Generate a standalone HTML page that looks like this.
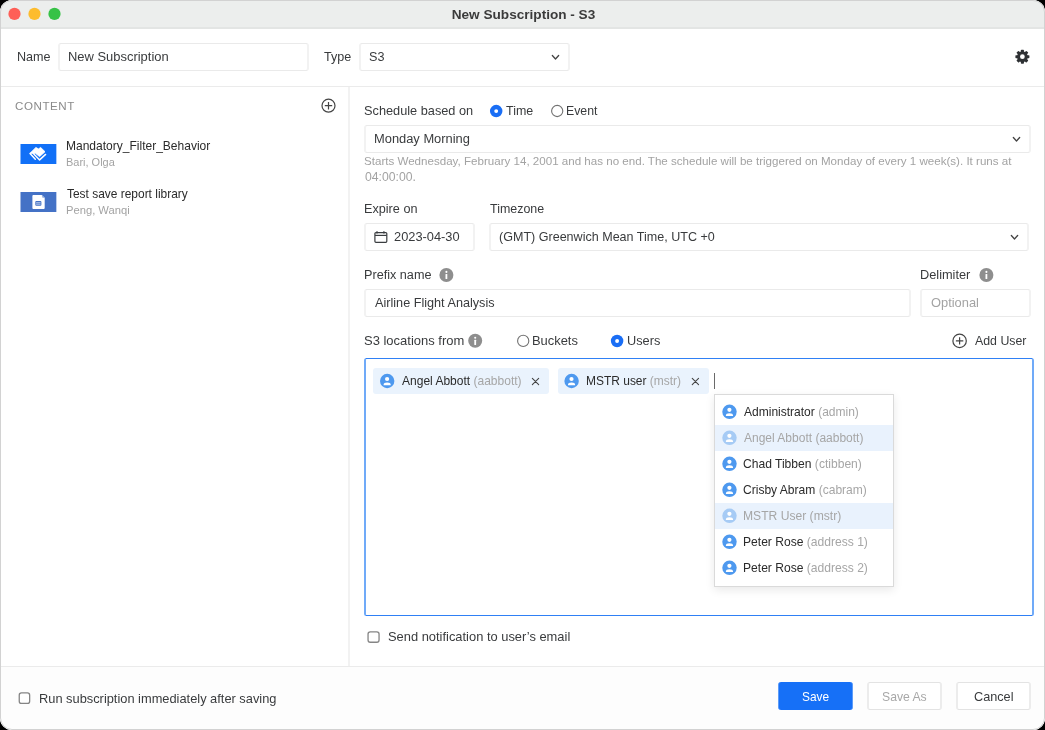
<!DOCTYPE html>
<html><head><meta charset="utf-8">
<style>
*{box-sizing:border-box;margin:0;padding:0}
html,body{width:1045px;height:730px;overflow:hidden;background:#000}
body{font-family:"Liberation Sans",sans-serif;color:#333;position:relative}
#win{position:absolute;left:0;top:0;width:1045px;height:730px;border-radius:12px;background:#fff;overflow:hidden}
#frame{position:absolute;left:0;top:0;width:1045px;height:730px;border-radius:12px;border:1px solid #d2d2d2;pointer-events:none}
.a{position:absolute}
.t{position:absolute;white-space:nowrap;line-height:1;will-change:transform}
.box{position:absolute;border-style:solid;border-color:#eaeaea #f2f2f2;border-width:1px 2px;border-radius:3px;background:#fff}
.radio{position:absolute;width:12px;height:12px;border-radius:50%;border:1.1px solid #737373;background:#fff}
.radio.on{border:3.6px solid #1a6ef5}
.info{position:absolute;width:14px;height:14px}
.uic{position:absolute;width:14.4px;height:14.4px}
.cb{position:absolute;width:12px;height:12px;border:1.3px solid #8c8c8c;border-radius:2.5px;background:#fff}
.g{color:#a6a6a6}
</style></head><body>
<div id="win">
<div class="a" style="left:0;top:0;width:1045px;height:27px;background:#eceeed"></div>
<div class="a" style="left:0;top:27px;width:1045px;height:2px;background:#e3e5e4"></div>
<svg class="a" style="left:0;top:0" width="70" height="27" viewBox="0 0 70 27"><circle cx="14.5" cy="13.9" r="6.1" fill="#fe5f57"/><circle cx="34.5" cy="13.9" r="6.1" fill="#fdbc2e"/><circle cx="54.5" cy="13.9" r="6.1" fill="#37c246"/></svg>
<div class="t" style="left:0;width:1045px;text-align:center;top:7.8px;font-size:13.6px;font-weight:bold;color:#3b3b3b;padding-left:2px">New Subscription - S3</div>
<div class="t" style="left:16.99px;top:51.00px;font-size:12.6px;color:#393b3d;">Name</div>
<div class="box" style="left:58px;top:43px;width:251px;height:28px"></div>
<div class="t" style="left:68.06px;top:51.00px;font-size:12.95px;color:#393b3d;">New Subscription</div>
<div class="t" style="left:323.85px;top:51.00px;font-size:12.57px;color:#393b3d;">Type</div>
<div class="box" style="left:359px;top:43px;width:211px;height:28px"></div>
<div class="t" style="left:369.33px;top:51.00px;font-size:12.65px;color:#393b3d;">S3</div>
<svg class="a" style="left:549px;top:51px;" width="14" height="14" viewBox="-6.500 -6.300 14 14"><path d="M-3.15 -1.75 L0 1.75 L3.15 -1.75" fill="none" stroke="#444" stroke-width="1.3" stroke-linecap="round" stroke-linejoin="round"/></svg>
<svg class="a" style="left:1013px;top:47px;" width="20" height="20" viewBox="-9.400 -9.700 20 20"><g fill="#2e3134"><rect x="-1.55" y="-7.0" width="3.1" height="3.2" rx="0.7" transform="rotate(0)"/><rect x="-1.55" y="-7.0" width="3.1" height="3.2" rx="0.7" transform="rotate(45)"/><rect x="-1.55" y="-7.0" width="3.1" height="3.2" rx="0.7" transform="rotate(90)"/><rect x="-1.55" y="-7.0" width="3.1" height="3.2" rx="0.7" transform="rotate(135)"/><rect x="-1.55" y="-7.0" width="3.1" height="3.2" rx="0.7" transform="rotate(180)"/><rect x="-1.55" y="-7.0" width="3.1" height="3.2" rx="0.7" transform="rotate(225)"/><rect x="-1.55" y="-7.0" width="3.1" height="3.2" rx="0.7" transform="rotate(270)"/><rect x="-1.55" y="-7.0" width="3.1" height="3.2" rx="0.7" transform="rotate(315)"/><circle r="5.35"/></g><circle r="2.35" fill="#fff"/></svg>
<div class="a" style="left:0;top:86px;width:1045px;height:1px;background:#ebebeb"></div>
<div class="a" style="left:348px;top:87px;width:2px;height:579px;background:#f2f2f2"></div>
<div class="a" style="left:0;top:666px;width:1045px;height:1px;background:#ebebeb"></div>
<div class="t" style="left:15.22px;top:101.00px;font-size:11.58px;color:#8b8b8b;letter-spacing:0.55px">CONTENT</div>
<svg class="a" style="left:319px;top:96px;" width="20" height="20" viewBox="-9.500 -9.700 20 20"><circle r="6.50" fill="none" stroke="#444" stroke-width="1.2"/><path d="M-3.7 0 H3.7 M0 -3.7 V3.7" stroke="#444" stroke-width="1.2"/></svg>
<svg class="a" style="left:20px;top:144px" width="38" height="20" viewBox="0 0 38 20"><rect x="0.5" width="35.85" height="20" fill="#1170f7"/><path d="M10.0 9.3 L15.9 3.5 L18.4 4.9 L20.7 3.5 L25.0 7.7 L19.6 12.6 L15.4 9.3 Z" fill="#fff" stroke="#fff" stroke-width="0.9" stroke-linejoin="round"/><path d="M10.0 9.6 L15.3 15.3 M13.3 9.5 L19.6 15.9 L25.6 10.4" fill="none" stroke="#fff" stroke-width="1.45" stroke-linecap="round" stroke-linejoin="round"/></svg>
<div class="t" style="left:65.94px;top:140.00px;font-size:12.02px;color:#2b2b2b;">Mandatory_Filter_Behavior</div>
<div class="t" style="left:66.02px;top:157.00px;font-size:10.97px;color:#a3a3a3;">Bari, Olga</div>
<svg class="a" style="left:20px;top:192px" width="38" height="20" viewBox="0 0 38 20"><rect x="0.5" width="35.85" height="20" fill="#4472c6"/><path d="M13.4 2.9 H21.8 L24.7 5.8 V15.9 Q24.7 16.9 23.7 16.9 H13.4 Q12.4 16.9 12.4 15.9 V3.9 Q12.4 2.9 13.4 2.9 Z" fill="#fff"/><path d="M21.6 3.5 L24.2 6.1 Q22.3 6.0 21.6 3.5 Z" fill="#4472c6"/><rect x="15.3" y="9.0" width="6.1" height="4.8" rx="1" fill="#4472c6"/><path d="M16.1 10.7 H20.6 M16.1 12.2 H20.6" stroke="#fff" stroke-width="0.6"/></svg>
<div class="t" style="left:66.66px;top:189.00px;font-size:11.94px;color:#2b2b2b;">Test save report library</div>
<div class="t" style="left:66.00px;top:205.00px;font-size:11.19px;color:#a3a3a3;">Peng, Wanqi</div>
<div class="t" style="left:364.03px;top:105.00px;font-size:12.75px;color:#393b3d;">Schedule based on</div>
<svg class="a" style="left:488px;top:103px;" width="18" height="18" viewBox="-8.200 -8.100 18 18"><circle r="6.25" fill="#1a6ef5"/><circle r="1.95" fill="#fff"/></svg>
<div class="t" style="left:506.05px;top:105.00px;font-size:12.45px;color:#393b3d;">Time</div>
<svg class="a" style="left:549px;top:103px;" width="18" height="18" viewBox="-8.200 -8.000 18 18"><circle r="5.6" fill="#fff" stroke="#727272" stroke-width="1.1"/></svg>
<div class="t" style="left:566.22px;top:105.00px;font-size:12.31px;color:#393b3d;">Event</div>
<div class="box" style="left:364px;top:125px;width:667px;height:28px"></div>
<div class="t" style="left:373.77px;top:133.00px;font-size:12.88px;color:#393b3d;">Monday Morning</div>
<svg class="a" style="left:1010px;top:133px;" width="14" height="14" viewBox="-6.500 -6.300 14 14"><path d="M-3.15 -1.75 L0 1.75 L3.15 -1.75" fill="none" stroke="#444" stroke-width="1.3" stroke-linecap="round" stroke-linejoin="round"/></svg>
<div class="t" style="left:364.48px;top:156.00px;font-size:11.59px;color:#a3a3a3;">Starts Wednesday, February 14, 2001 and has no end. The schedule will be triggered on Monday of every 1 week(s). It runs at</div>
<div class="t" style="left:364.51px;top:171.00px;font-size:12.23px;color:#a3a3a3;">04:00:00.</div>
<div class="t" style="left:363.79px;top:203.00px;font-size:12.67px;color:#393b3d;">Expire on</div>
<div class="t" style="left:490.45px;top:203.00px;font-size:12.45px;color:#393b3d;">Timezone</div>
<div class="box" style="left:364px;top:223px;width:111px;height:28px"></div>
<svg class="a" style="left:373px;top:230px" width="15" height="14" viewBox="0 0 15 14"><rect x="1.9" y="2.6" width="11.9" height="9.7" rx="1" fill="none" stroke="#3a3d40" stroke-width="1.2"/><path d="M2 5.4 H13.8" stroke="#3a3d40" stroke-width="1.2"/><path d="M4.0 1.2 V3.4 M10.9 1.2 V3.4" stroke="#3a3d40" stroke-width="1.3"/></svg>
<div class="t" style="left:394.26px;top:231.00px;font-size:12.82px;color:#393b3d;">2023-04-30</div>
<div class="box" style="left:489px;top:223px;width:540px;height:28px"></div>
<div class="t" style="left:499.25px;top:231.00px;font-size:12.56px;color:#393b3d;">(GMT) Greenwich Mean Time, UTC +0</div>
<svg class="a" style="left:1008px;top:231px;" width="14" height="14" viewBox="-6.500 -6.200 14 14"><path d="M-3.15 -1.75 L0 1.75 L3.15 -1.75" fill="none" stroke="#444" stroke-width="1.3" stroke-linecap="round" stroke-linejoin="round"/></svg>
<div class="t" style="left:363.89px;top:269.00px;font-size:12.65px;color:#393b3d;">Prefix name</div>
<svg class="a" style="left:438px;top:267px;" width="18" height="18" viewBox="-8.400 -8.000 18 18"><circle r="7" fill="#8e8e8e"/><circle cx="0" cy="-3.1" r="1.05" fill="#fff"/><rect x="-0.9" y="-1.1" width="1.8" height="5.2" rx="0.5" fill="#fff"/></svg>
<div class="t" style="left:920.28px;top:269.00px;font-size:12.77px;color:#393b3d;">Delimiter</div>
<svg class="a" style="left:978px;top:267px;" width="18" height="18" viewBox="-8.400 -8.000 18 18"><circle r="7" fill="#8e8e8e"/><circle cx="0" cy="-3.1" r="1.05" fill="#fff"/><rect x="-0.9" y="-1.1" width="1.8" height="5.2" rx="0.5" fill="#fff"/></svg>
<div class="box" style="left:364px;top:289px;width:547px;height:28px"></div>
<div class="t" style="left:375.24px;top:297.00px;font-size:12.67px;color:#393b3d;">Airline Flight Analysis</div>
<div class="box" style="left:920px;top:289px;width:111px;height:28px"></div>
<div class="t" style="left:930.52px;top:297.00px;font-size:12.86px;color:#a3a3a3;">Optional</div>
<div class="t" style="left:364.02px;top:334.00px;font-size:12.99px;color:#393b3d;">S3 locations from</div>
<svg class="a" style="left:467px;top:332px;" width="18" height="18" viewBox="-8.200 -8.800 18 18"><circle r="7" fill="#8e8e8e"/><circle cx="0" cy="-3.1" r="1.05" fill="#fff"/><rect x="-0.9" y="-1.1" width="1.8" height="5.2" rx="0.5" fill="#fff"/></svg>
<svg class="a" style="left:515px;top:332px;" width="18" height="18" viewBox="-8.200 -8.900 18 18"><circle r="5.6" fill="#fff" stroke="#727272" stroke-width="1.1"/></svg>
<div class="t" style="left:531.97px;top:335.00px;font-size:12.91px;color:#393b3d;">Buckets</div>
<svg class="a" style="left:609px;top:333px;" width="18" height="18" viewBox="-8.100 -8.000 18 18"><circle r="6.25" fill="#1a6ef5"/><circle r="1.95" fill="#fff"/></svg>
<div class="t" style="left:626.64px;top:335.00px;font-size:12.76px;color:#393b3d;">Users</div>
<svg class="a" style="left:950px;top:331px;" width="20" height="20" viewBox="-9.600 -9.900 20 20"><circle r="6.70" fill="none" stroke="#444" stroke-width="1.2"/><path d="M-3.7 0 H3.7 M0 -3.7 V3.7" stroke="#444" stroke-width="1.2"/></svg>
<div class="t" style="left:975.14px;top:335.00px;font-size:12.35px;color:#393b3d;">Add User</div>
<div class="a" style="left:364px;top:358px;width:670px;height:258px;border-style:solid;border-color:#2f80f5 #70aaf8;border-width:1px 2px;border-radius:2.5px"></div>
<div class="a" style="left:373px;top:368px;width:176px;height:26px;background:#eaf3fd;border-radius:3px"></div>
<svg class="a" style="left:379px;top:373px;" width="18" height="18" viewBox="-8.200 -8.000 18 18"><circle r="7.2" fill="#4e99ef"/><circle cx="-0.1" cy="-2.0" r="2.1" fill="#fff"/><path d="M-3.6 4.2 L-3.6 3.4 Q-3.6 1.4 -0.1 1.4 Q3.5 1.4 3.5 3.4 L3.5 4.2 Z" fill="#fff"/></svg>
<div class="t" style="left:401.64px;top:375.00px;font-size:12.02px;color:#2b2b2b;">Angel Abbott <span class="g">(aabbott)</span></div>
<svg class="a" style="left:529px;top:375px;" width="14" height="14" viewBox="-6.500 -6.500 14 14"><path d="M-3.15 -3.15 L3.15 3.15 M3.15 -3.15 L-3.15 3.15" stroke="#444" stroke-width="1.1" stroke-linecap="round"/></svg>
<div class="a" style="left:558px;top:368px;width:151px;height:26px;background:#eaf3fd;border-radius:3px"></div>
<svg class="a" style="left:563px;top:373px;" width="18" height="18" viewBox="-8.600 -8.000 18 18"><circle r="7.2" fill="#4e99ef"/><circle cx="-0.1" cy="-2.0" r="2.1" fill="#fff"/><path d="M-3.6 4.2 L-3.6 3.4 Q-3.6 1.4 -0.1 1.4 Q3.5 1.4 3.5 3.4 L3.5 4.2 Z" fill="#fff"/></svg>
<div class="t" style="left:585.94px;top:376.00px;font-size:11.97px;color:#2b2b2b;">MSTR user <span class="g">(mstr)</span></div>
<svg class="a" style="left:689px;top:375px;" width="14" height="14" viewBox="-6.400 -6.500 14 14"><path d="M-3.15 -3.15 L3.15 3.15 M3.15 -3.15 L-3.15 3.15" stroke="#444" stroke-width="1.1" stroke-linecap="round"/></svg>
<div class="a" style="left:714px;top:373px;width:1px;height:16px;background:#6a6a6a"></div>
<div class="a" style="left:714px;top:394px;width:180px;height:193px;background:#fff;border:1px solid #dadada;box-shadow:0 3px 9px rgba(0,0,0,0.09)"></div>
<svg class="a" style="left:721px;top:403px;" width="18" height="18" viewBox="-8.500 -8.800 18 18"><circle r="7.2" fill="#4e99ef"/><circle cx="-0.1" cy="-2.0" r="2.1" fill="#fff"/><path d="M-3.6 4.2 L-3.6 3.4 Q-3.6 1.4 -0.1 1.4 Q3.5 1.4 3.5 3.4 L3.5 4.2 Z" fill="#fff"/></svg>
<div class="t" style="left:743.64px;top:406.00px;font-size:12.02px;color:#2b2b2b;">Administrator <span class="g">(admin)</span></div>
<div class="a" style="left:715px;top:425px;width:178px;height:26px;background:#e9f2fd"></div>
<svg class="a" style="left:721px;top:429px;" width="18" height="18" viewBox="-8.500 -8.800 18 18"><circle r="7.2" fill="#a6cbf5"/><circle cx="-0.1" cy="-2.0" r="2.1" fill="#fff"/><path d="M-3.6 4.2 L-3.6 3.4 Q-3.6 1.4 -0.1 1.4 Q3.5 1.4 3.5 3.4 L3.5 4.2 Z" fill="#fff"/></svg>
<div class="t" style="left:743.64px;top:432.00px;font-size:12.01px;color:#a6a6a6;">Angel Abbott (aabbott)</div>
<svg class="a" style="left:721px;top:455px;" width="18" height="18" viewBox="-8.500 -8.800 18 18"><circle r="7.2" fill="#4e99ef"/><circle cx="-0.1" cy="-2.0" r="2.1" fill="#fff"/><path d="M-3.6 4.2 L-3.6 3.4 Q-3.6 1.4 -0.1 1.4 Q3.5 1.4 3.5 3.4 L3.5 4.2 Z" fill="#fff"/></svg>
<div class="t" style="left:743.10px;top:458.00px;font-size:12.08px;color:#2b2b2b;">Chad Tibben <span class="g">(ctibben)</span></div>
<svg class="a" style="left:721px;top:481px;" width="18" height="18" viewBox="-8.500 -8.800 18 18"><circle r="7.2" fill="#4e99ef"/><circle cx="-0.1" cy="-2.0" r="2.1" fill="#fff"/><path d="M-3.6 4.2 L-3.6 3.4 Q-3.6 1.4 -0.1 1.4 Q3.5 1.4 3.5 3.4 L3.5 4.2 Z" fill="#fff"/></svg>
<div class="t" style="left:743.10px;top:484.00px;font-size:12.05px;color:#2b2b2b;">Crisby Abram <span class="g">(cabram)</span></div>
<div class="a" style="left:715px;top:503px;width:178px;height:26px;background:#e9f2fd"></div>
<svg class="a" style="left:721px;top:507px;" width="18" height="18" viewBox="-8.500 -8.800 18 18"><circle r="7.2" fill="#a6cbf5"/><circle cx="-0.1" cy="-2.0" r="2.1" fill="#fff"/><path d="M-3.6 4.2 L-3.6 3.4 Q-3.6 1.4 -0.1 1.4 Q3.5 1.4 3.5 3.4 L3.5 4.2 Z" fill="#fff"/></svg>
<div class="t" style="left:742.73px;top:510.00px;font-size:12.12px;color:#a6a6a6;">MSTR User (mstr)</div>
<svg class="a" style="left:721px;top:533px;" width="18" height="18" viewBox="-8.500 -8.800 18 18"><circle r="7.2" fill="#4e99ef"/><circle cx="-0.1" cy="-2.0" r="2.1" fill="#fff"/><path d="M-3.6 4.2 L-3.6 3.4 Q-3.6 1.4 -0.1 1.4 Q3.5 1.4 3.5 3.4 L3.5 4.2 Z" fill="#fff"/></svg>
<div class="t" style="left:742.73px;top:536.00px;font-size:12.09px;color:#2b2b2b;">Peter Rose <span class="g">(address 1)</span></div>
<svg class="a" style="left:721px;top:559px;" width="18" height="18" viewBox="-8.500 -8.800 18 18"><circle r="7.2" fill="#4e99ef"/><circle cx="-0.1" cy="-2.0" r="2.1" fill="#fff"/><path d="M-3.6 4.2 L-3.6 3.4 Q-3.6 1.4 -0.1 1.4 Q3.5 1.4 3.5 3.4 L3.5 4.2 Z" fill="#fff"/></svg>
<div class="t" style="left:742.73px;top:562.00px;font-size:12.09px;color:#2b2b2b;">Peter Rose <span class="g">(address 2)</span></div>
<svg class="a" style="left:365px;top:629px;" width="18" height="18" viewBox="-8.550 -8.050 18 18"><rect x="-5.50" y="-5.20" width="11.00" height="10.40" rx="2.2" fill="#fff" stroke="#858585" stroke-width="1.3"/></svg>
<div class="t" style="left:388.22px;top:631.00px;font-size:12.9px;color:#393b3d;">Send notification to user’s email</div>
<div class="a" style="left:0;top:667px;width:1045px;height:63px;background:#fdfdfd"></div>
<svg class="a" style="left:16px;top:690px;" width="18" height="18" viewBox="-8.450 -8.150 18 18"><rect x="-5.20" y="-5.20" width="10.40" height="10.40" rx="2.2" fill="#fff" stroke="#858585" stroke-width="1.3"/></svg>
<div class="t" style="left:38.97px;top:693.00px;font-size:12.84px;color:#393b3d;">Run subscription immediately after saving</div>
<div class="a" style="left:778px;top:682px;width:75px;height:28px;background:#1670f7;border-radius:3px;border-style:solid;border-color:#1670f7 #5c9cf9;border-width:0 1px"></div>
<div class="t" style="left:801.86px;top:692.00px;font-size:11.92px;color:#fff;">Save</div>
<div class="box" style="left:867px;top:682px;width:75px;height:28px;border-color:#e3e3e3 #ececec"></div>
<div class="t" style="left:881.95px;top:691.00px;font-size:12.2px;color:#a8a8a8;">Save As</div>
<div class="box" style="left:956px;top:682px;width:75px;height:28px;border-color:#e3e3e3 #ececec"></div>
<div class="t" style="left:973.97px;top:691.00px;font-size:12.69px;color:#393b3d;">Cancel</div>
<div id="frame"></div>
</div>
</body></html>
